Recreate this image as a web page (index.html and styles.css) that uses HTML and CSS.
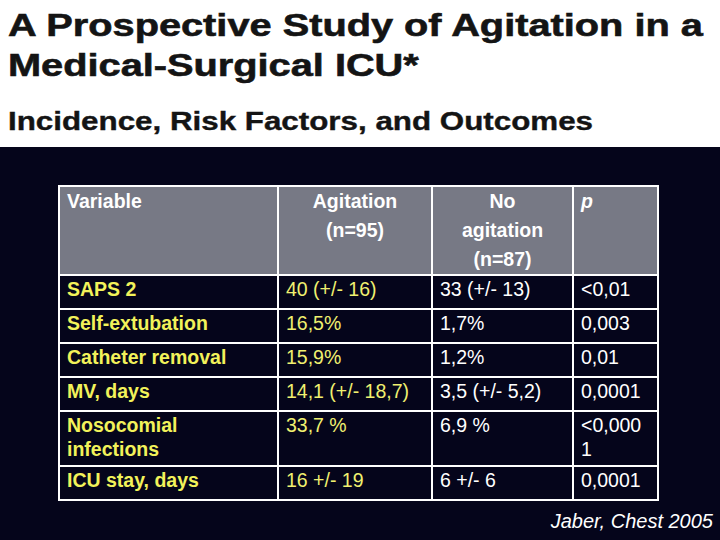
FILE: index.html
```html
<!DOCTYPE html>
<html>
<head>
<meta charset="utf-8">
<link rel="stylesheet" href="styles.css">
</head>
<body>
<div class="slide">
  <header class="head">
    <h1 class="title"><span class="line">A Prospective Study of Agitation in a</span><span class="line">Medical-Surgical ICU*</span></h1>
    <h2 class="subtitle">Incidence, Risk Factors, and Outcomes</h2>
  </header>
  <main class="content">
    <table class="data">
      <colgroup>
        <col class="c1"><col class="c2"><col class="c3"><col class="c4">
      </colgroup>
      <thead>
        <tr class="hrow">
          <th class="left">Variable</th>
          <th>Agitation<br>(n=95)</th>
          <th>No<br>agitation<br>(n=87)</th>
          <th class="left"><i>p</i></th>
        </tr>
      </thead>
      <tbody>
        <tr><td class="label">SAPS 2</td><td class="ag">40 (+/- 16)</td><td>33 (+/- 13)</td><td>&lt;0,01</td></tr>
        <tr><td class="label">Self-extubation</td><td class="ag">16,5%</td><td>1,7%</td><td>0,003</td></tr>
        <tr><td class="label">Catheter removal</td><td class="ag">15,9%</td><td>1,2%</td><td>0,01</td></tr>
        <tr><td class="label">MV, days</td><td class="ag">14,1 (+/- 18,7)</td><td>3,5 (+/- 5,2)</td><td>0,0001</td></tr>
        <tr class="tall"><td class="label">Nosocomial infections</td><td class="ag">33,7 %</td><td>6,9 %</td><td>&lt;0,000 1</td></tr>
        <tr><td class="label">ICU stay, days</td><td class="ag">16 +/- 19</td><td>6 +/- 6</td><td>0,0001</td></tr>
      </tbody>
    </table>
    <p class="cite">Jaber, Chest 2005</p>
  </main>
</div>
</body>
</html>
```

FILE: styles.css
```css
html, body {
  margin: 0;
  padding: 0;
}
body {
  width: 720px;
  height: 540px;
  overflow: hidden;
  background: #05051b;
  font-family: "Liberation Sans", Arial, sans-serif;
}
.slide {
  display: flex;
  flex-direction: column;
  width: 720px;
  height: 540px;
}
.head {
  background: #ffffff;
  height: 147px;
  box-sizing: border-box;
  padding: 5px 0 0 8px;
  color: #141414;
}
.title {
  margin: 0;
  width: max-content;
  font-size: 32px;
  line-height: 40px;
  font-weight: bold;
  display: flex;
  flex-direction: column;
  transform: scaleX(1.242);
  transform-origin: left top;
  white-space: nowrap;
  -webkit-text-stroke: 0.6px #141414;
}
.subtitle {
  margin: 21px 0 0 0;
  width: max-content;
  font-size: 26px;
  line-height: 30px;
  font-weight: bold;
  transform: scaleX(1.205);
  transform-origin: left top;
  white-space: nowrap;
  -webkit-text-stroke: 0.4px #141414;
}
.content {
  flex: 1;
  display: flex;
  flex-direction: column;
  padding: 38px 0 0 58px;
}
.data {
  border-collapse: collapse;
  table-layout: fixed;
  width: 599px;
  font-size: 19.5px;
}
.c1 { width: 219px; }
.c2 { width: 154px; }
.c3 { width: 141px; }
.c4 { width: 85px; }
.data th, .data td {
  border: 2px solid #ffffff;
  vertical-align: top;
  padding: 1px 7px 0 7px;
  line-height: 24px;
  overflow: hidden;
}
.data th {
  background: #777985;
  color: #ffffff;
  font-weight: bold;
  text-align: center;
  line-height: 29px;
  padding-top: 0;
}
.data th.left { text-align: left; }
.hrow { height: 88px; }
.data tbody tr { height: 34px; }
.data tbody tr.tall { height: 55px; }
.data td {
  color: #ffffff;
  text-align: left;
}
.data td.label {
  color: #f2f25a;
  font-weight: bold;
}
.data td.ag {
  color: #f0f070;
}
.cite {
  margin: 8px 7px 0 0;
  align-self: flex-end;
  color: #ffffff;
  font-style: italic;
  font-size: 20px;
  line-height: 24px;
}
```
